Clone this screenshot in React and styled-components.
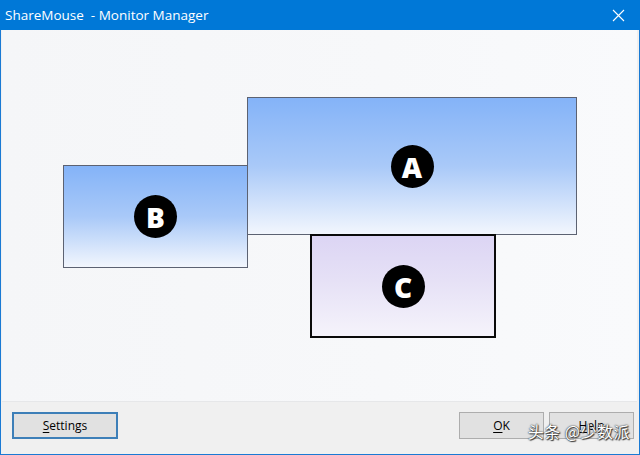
import styled, { createGlobalStyle } from 'styled-components';

const monitors = [
    { id: 'A', left: 245, top: 67, width: 330, height: 138, tone: 'blue' },
    { id: 'B', left: 61, top: 135, width: 185, height: 103, tone: 'blue' },
    { id: 'C', left: 308, top: 204, width: 186, height: 104, tone: 'violet', selected: true },
];

export default function App() {
    return (
        <>
            <GlobalStyle />
            <Window>
                <TitleBar>
                    <Title>ShareMouse&nbsp;&nbsp;- Monitor Manager</Title>
                    <CloseButton aria-label="close">
                        <svg width="13" height="13" viewBox="0 0 13 13">
                            <path d="M1 1 L12 12 M12 1 L1 12" stroke="#fff" strokeWidth="1.1" />
                        </svg>
                    </CloseButton>
                </TitleBar>
                <Canvas>
                    {monitors.map((m) => (
                        <Monitor
                            key={m.id}
                            $tone={m.tone}
                            $selected={m.selected}
                            style={{ left: m.left, top: m.top, width: m.width, height: m.height }}
                        >
                            <Badge>{m.id}</Badge>
                        </Monitor>
                    ))}
                </Canvas>
                <Footer>
                    <Button $default $wide>
                        <u>S</u>ettings
                    </Button>
                    <Spacer />
                    <Button>
                        <u>O</u>K
                    </Button>
                    <Button>
                        <u>H</u>elp
                    </Button>
                    <Watermark>头条 @少数派</Watermark>
                </Footer>
            </Window>
        </>
    );
}

const GlobalStyle = createGlobalStyle`
    html, body {
        margin: 0;
        padding: 0;
        background: #f0f0f0;
    }
    body {
        font-family: 'Open Sans', 'Noto Sans', sans-serif;
    }
`;

const Window = styled.div`
    width: 640px;
    height: 455px;
    box-sizing: border-box;
    display: flex;
    flex-direction: column;
    border: 1px solid #1a7ad4;
    border-top: none;
    background: #f0f0f0;
    position: relative;
`;

const TitleBar = styled.div`
    height: 30px;
    flex-shrink: 0;
    margin: 0 -1px;
    background: #0078d7;
    display: flex;
    align-items: center;
    justify-content: space-between;
    padding: 0 0 0 5px;
`;

const Title = styled.span`
    color: #ffffff;
    font-family: 'Open Sans', 'Noto Sans', sans-serif;
    font-size: 13.5px;
`;

const CloseButton = styled.div`
    width: 46px;
    height: 30px;
    display: flex;
    align-items: center;
    justify-content: center;
    margin-right: -1px;
`;

const Canvas = styled.div`
    position: relative;
    flex: 1;
    margin: 0 2px 0 1px;
    background: linear-gradient(90deg, #f5f6f8 0%, #f7f8fa 60%, #f9fafc 100%);
    border-bottom: 1px solid #e6e7e9;
`;

const Monitor = styled.div`
    position: absolute;
    box-sizing: border-box;
    display: flex;
    align-items: center;
    justify-content: center;
    border: ${(p) => (p.$selected ? '2px solid #0a0a0a' : '1px solid #5c6272')};
    background: ${(p) =>
        p.$tone === 'violet'
            ? 'linear-gradient(180deg, #dcd5f4 0%, #e6e1f6 45%, #f5f3fb 100%)'
            : 'linear-gradient(180deg, #84b3f8 0%, #a9c9f8 50%, #f2f6fd 100%)'};
`;

const Badge = styled.div`
    width: 43px;
    height: 43px;
    border-radius: 50%;
    background: #000;
    color: #fff;
    display: flex;
    align-items: center;
    justify-content: center;
    font-family: 'Open Sans', 'DejaVu Sans', sans-serif;
    font-weight: 800;
    font-size: 28px;
    line-height: 1;
    padding-top: 1px;
    box-sizing: border-box;
`;

const Footer = styled.div`
    height: 52px;
    flex-shrink: 0;
    display: flex;
    align-items: flex-start;
    gap: 5px;
    padding: 10px 5px 0 11px;
    box-sizing: border-box;
    position: relative;
`;

const Spacer = styled.div`
    flex: 1;
`;

const Button = styled.div`
    width: ${(p) => (p.$wide ? '106px' : '85px')};
    height: 27px;
    box-sizing: border-box;
    display: flex;
    align-items: center;
    justify-content: center;
    background: #e1e1e1;
    border: ${(p) => (p.$default ? '2px solid #3d7fb8' : '1px solid #adadad')};
    font-family: 'Open Sans', 'Noto Sans', sans-serif;
    font-size: 12px;
    color: #000;

    u {
        text-decoration-thickness: 1px;
        text-underline-offset: 2px;
    }
`;

const Watermark = styled.div`
    position: absolute;
    right: 9px;
    top: 17px;
    color: #ffffff;
    font-family: 'Noto Sans CJK SC', sans-serif;
    font-size: 16px;
    letter-spacing: 0.5px;
    text-shadow: 0 0 1px #333, 0 0 2px #444, 1px 1px 1px #333;
`;
